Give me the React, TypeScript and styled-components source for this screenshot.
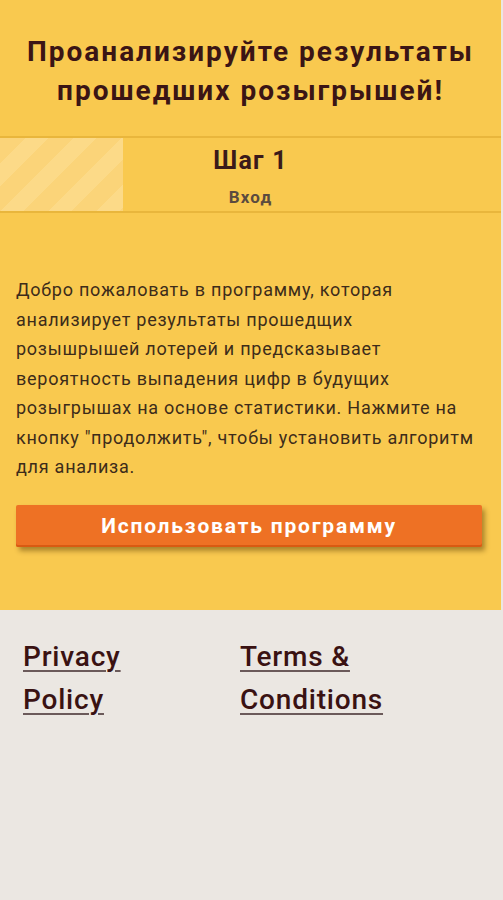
import styled, { createGlobalStyle } from "styled-components";

const GlobalStyle = createGlobalStyle`
  html, body {
    margin: 0;
    padding: 0;
    background: #ebe7e2;
  }
  body {
    font-family: Roboto, "Liberation Sans", sans-serif;
  }
`;

const Page = styled.div`
  width: 501px;
  min-height: 900px;
  display: flex;
  flex-direction: column;
`;

const Hero = styled.section`
  background: #f9c94f;
  display: flex;
  flex-direction: column;
`;

const Title = styled.h1`
  margin: 0;
  padding: 32px 8px 26px;
  text-align: center;
  font-size: 28px;
  line-height: 39px;
  font-weight: 700;
  letter-spacing: 2px;
  color: #3b1515;
  border-bottom: 2px solid #e9b63c;
`;

const Steps = styled.div`
  position: relative;
  height: 73px;
  border-bottom: 2px solid #e9b63c;
  display: flex;
  flex-direction: column;
  align-items: center;
`;

const Progress = styled.div<{ $pct: number }>`
  position: absolute;
  left: 0;
  top: 0;
  bottom: 0;
  width: ${(p) => p.$pct}%;
  background: repeating-linear-gradient(
    135deg,
    #fbd479 0px,
    #fbd479 18px,
    #fcda88 18px,
    #fcda88 34px
  );
`;

const StepTitle = styled.div`
  position: relative;
  margin-top: 9px;
  font-size: 25px;
  line-height: 28px;
  font-weight: 700;
  letter-spacing: 1.2px;
  color: #3b1a1a;
`;

const StepLabel = styled.div`
  position: relative;
  margin-top: 12px;
  font-size: 17px;
  line-height: 20px;
  font-weight: 700;
  letter-spacing: 1.2px;
  color: #5b4b3f;
`;

const Body = styled.div`
  padding: 62px 16px 63px;
  display: flex;
  flex-direction: column;
  align-items: flex-start;
  gap: 23px;
`;

const Intro = styled.p`
  margin: 0;
  width: 482px;
  font-size: 18px;
  line-height: 29.5px;
  letter-spacing: 0.75px;
  color: #3d2c1a;
`;

const Action = styled.button`
  width: 466px;
  height: 42px;
  padding: 0;
  border: none;
  border-radius: 2px;
  background: #ee7124;
  color: #ffffff;
  font-family: Roboto, "Liberation Sans", sans-serif;
  font-size: 21px;
  font-weight: 700;
  letter-spacing: 1.8px;
  box-shadow: 3px 4px 5px rgba(80, 50, 0, 0.45), inset 0 -2px 0 #d95a12;
  cursor: pointer;
`;

const Footer = styled.footer`
  flex: 1;
  background: #ebe7e2;
  padding: 25px 23px;
  display: grid;
  grid-template-columns: 217px 1fr;
  align-content: start;
`;

const FooterLink = styled.a`
  font-size: 28px;
  line-height: 43px;
  font-weight: 500;
  letter-spacing: 0.8px;
  color: #3a1212;
  text-decoration: underline;
  text-decoration-color: #6b5a5a;
  text-underline-offset: 4px;
  text-decoration-thickness: 2px;
  width: 160px;
`;

const App = () => {
  return (
    <Page>
      <GlobalStyle />
      <Hero>
        <Title>Проанализируйте результаты прошедших розыгрышей!</Title>
        <Steps>
          <Progress $pct={24.5} />
          <StepTitle>Шаг 1</StepTitle>
          <StepLabel>Вход</StepLabel>
        </Steps>
        <Body>
          <Intro>
            Добро пожаловать в программу, которая
            <br />
            анализирует результаты прошедщих
            <br />
            розышрышей лотерей и предсказывает
            <br />
            вероятность выпадения цифр в будущих
            <br />
            розыгрышах на основе статистики. Нажмите на
            <br />
            кнопку "продолжить", чтобы установить алгоритм
            <br />
            для анализа.
          </Intro>
          <Action>Использовать программу</Action>
        </Body>
      </Hero>
      <Footer>
        <FooterLink href="#">Privacy Policy</FooterLink>
        <FooterLink href="#">Terms &amp; Conditions</FooterLink>
      </Footer>
    </Page>
  );
};

export default App;
